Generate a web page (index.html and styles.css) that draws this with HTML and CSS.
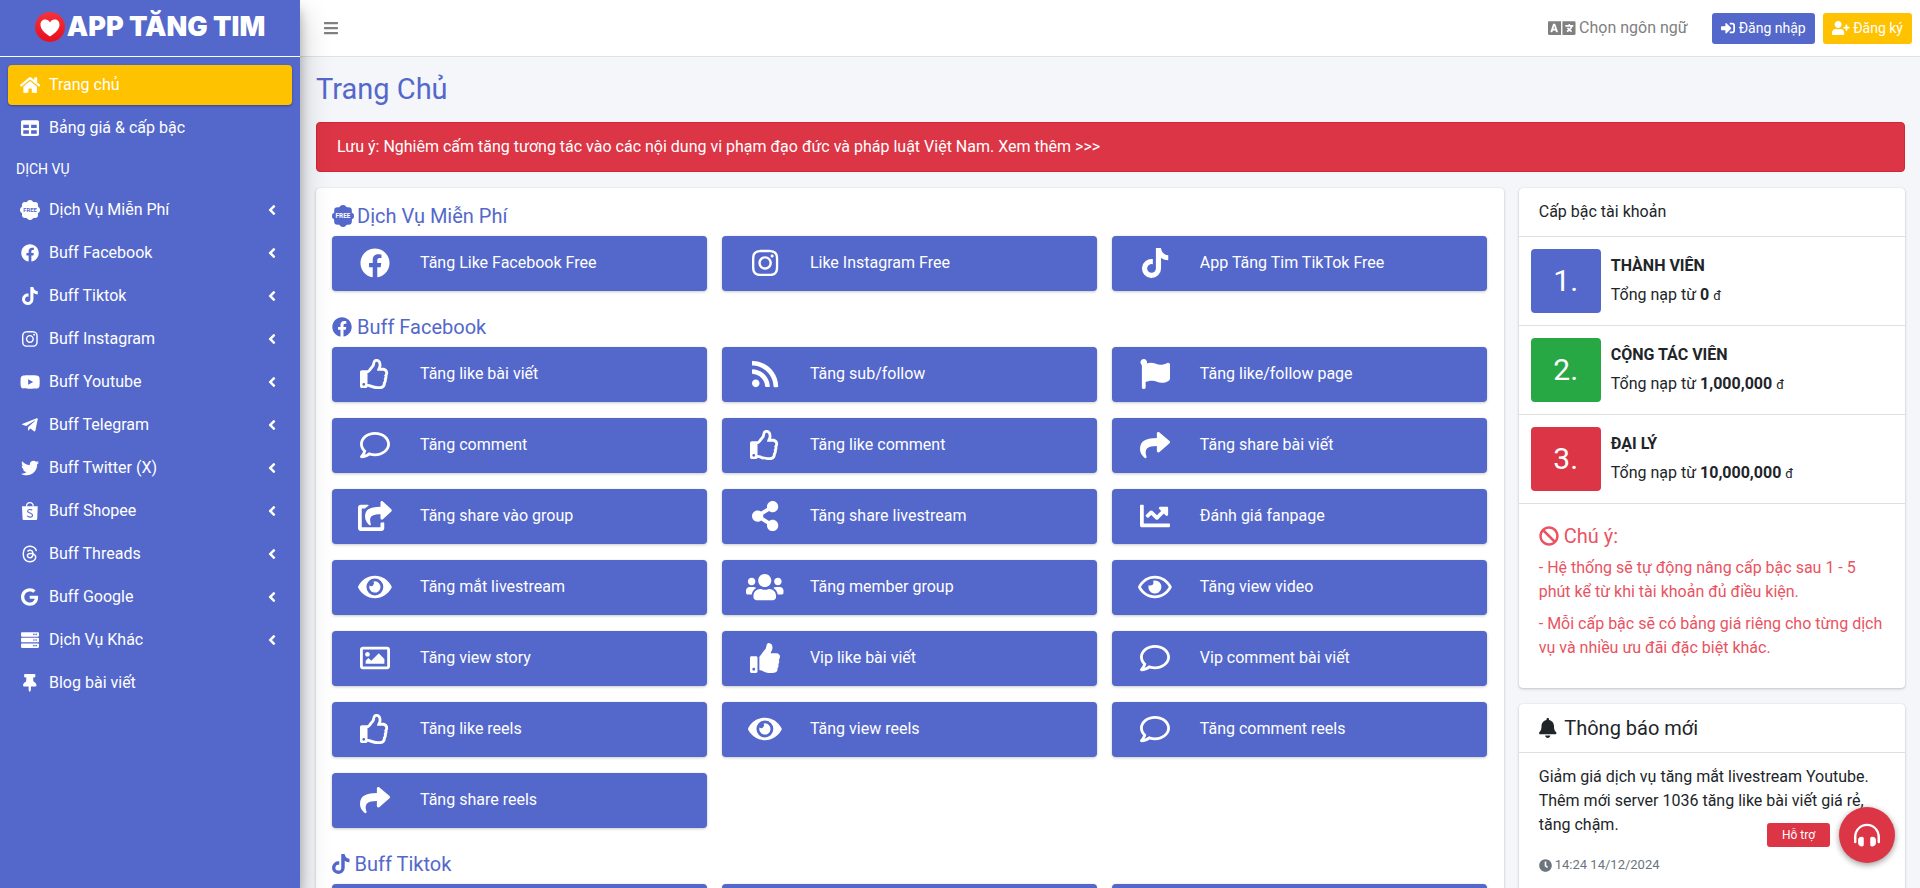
FILE: index.html
```html
<!DOCTYPE html>
<html lang="vi">
<head>
<meta charset="utf-8">
<meta name="viewport" content="width=device-width, initial-scale=1">
<title>App Tăng Tim</title>
<link rel="stylesheet" href="styles.css">
</head>
<body>
<svg class="sprite" aria-hidden="true">
<defs>
<path id="home" d="M280.37 148.26L96 300.11V464a16 16 0 0 0 16 16l112.06-.29a16 16 0 0 0 15.92-16V368a16 16 0 0 1 16-16h64a16 16 0 0 1 16 16v95.64a16 16 0 0 0 16 16.05L464 480a16 16 0 0 0 16-16V300L295.67 148.26a12.19 12.19 0 0 0-15.3 0zM571.6 251.47L488 182.56V44.05a12 12 0 0 0-12-12h-56a12 12 0 0 0-12 12v72.61L318.47 43a48 48 0 0 0-61 0L4.34 251.47a12 12 0 0 0-1.6 16.9l25.5 31A12 12 0 0 0 45.15 301l235.22-193.74a12.19 12.19 0 0 1 15.3 0L530.9 301a12 12 0 0 0 16.9-1.6l25.5-31a12 12 0 0 0-1.7-16.93z"/>
<path id="table" d="M464 32H48C21.49 32 0 53.49 0 80v352c0 26.51 21.49 48 48 48h416c26.51 0 48-21.49 48-48V80c0-26.51-21.49-48-48-48zM224 416H64v-96h160v96zm0-160H64v-96h160v96zm224 160H288v-96h160v96zm0-160H288v-96h160v96z"/>
<path id="bars" d="M16 132h416c8.837 0 16-7.163 16-16V76c0-8.837-7.163-16-16-16H16C7.163 60 0 67.163 0 76v40c0 8.837 7.163 16 16 16zm0 160h416c8.837 0 16-7.163 16-16v-40c0-8.837-7.163-16-16-16H16c-8.837 0-16 7.163-16 16v40c0 8.837 7.163 16 16 16zm0 160h416c8.837 0 16-7.163 16-16v-40c0-8.837-7.163-16-16-16H16c-8.837 0-16 7.163-16 16v40c0 8.837 7.163 16 16 16z"/>
<path id="facebook" d="M504 256C504 119 393 8 256 8S8 119 8 256c0 123.78 90.69 226.38 209.25 245V327.69h-63V256h63v-54.64c0-62.15 37-96.48 93.67-96.48 27.14 0 55.52 4.84 55.52 4.84v61h-31.28c-30.8 0-40.41 19.12-40.41 38.73V256h68.78l-11 71.69h-57.78V501C413.31 482.38 504 379.78 504 256z"/>
<path id="tiktok" d="M448,209.91a210.06,210.06,0,0,1-122.77-39.25V349.38A162.55,162.55,0,1,1,185,188.31V278.2a74.62,74.62,0,1,0,52.23,71.18V0l88,0a121.18,121.18,0,0,0,1.86,22.17h0A122.18,122.18,0,0,0,381,102.39a121.43,121.43,0,0,0,67,20.14Z"/>
<path id="instagram" d="M224.1 141c-63.6 0-114.9 51.3-114.9 114.9s51.3 114.9 114.9 114.9S339 319.5 339 255.9 287.7 141 224.1 141zm0 189.6c-41.1 0-74.7-33.5-74.7-74.7s33.5-74.7 74.7-74.7 74.7 33.5 74.7 74.7-33.6 74.7-74.7 74.7zm146.4-194.3c0 14.9-12 26.8-26.8 26.8-14.9 0-26.8-12-26.8-26.8s12-26.8 26.8-26.8 26.8 12 26.8 26.8zm76.1 27.2c-1.7-35.9-9.9-67.7-36.2-93.9-26.2-26.2-58-34.4-93.9-36.2-37-2.1-147.9-2.1-184.9 0-35.8 1.7-67.6 9.9-93.9 36.1s-34.4 58-36.2 93.9c-2.1 37-2.1 147.9 0 184.9 1.7 35.9 9.9 67.7 36.2 93.9s58 34.4 93.9 36.2c37 2.1 147.9 2.1 184.9 0 35.9-1.7 67.7-9.9 93.9-36.2 26.2-26.2 34.4-58 36.2-93.9 2.1-37 2.1-147.8 0-184.8zM398.8 388c-7.8 19.6-22.9 34.7-42.6 42.6-29.5 11.7-99.5 9-132.1 9s-102.7 2.6-132.1-9c-19.6-7.8-34.7-22.9-42.6-42.6-11.7-29.5-9-99.5-9-132.1s-2.6-102.7 9-132.1c7.8-19.6 22.9-34.7 42.6-42.6 29.5-11.7 99.5-9 132.1-9s102.7-2.6 132.1 9c19.6 7.8 34.7 22.9 42.6 42.6 11.7 29.5 9 99.5 9 132.1s2.7 102.7-9 132.1z"/>
<path id="youtube" d="M549.655 124.083c-6.281-23.65-24.787-42.276-48.284-48.597C458.781 64 288 64 288 64S117.22 64 74.629 75.486c-23.497 6.322-42.003 24.947-48.284 48.597-11.412 42.867-11.412 132.305-11.412 132.305s0 89.438 11.412 132.305c6.281 23.65 24.787 41.5 48.284 47.821C117.22 448 288 448 288 448s170.78 0 213.371-11.486c23.497-6.321 42.003-24.171 48.284-47.821 11.412-42.867 11.412-132.305 11.412-132.305s0-89.438-11.412-132.305zm-317.51 213.508V175.185l142.739 81.205-142.739 81.201z"/>
<path id="telegram" d="M446.7 98.6l-67.6 318.8c-5.1 22.5-18.4 28.1-37.3 17.5l-103-75.9-49.7 47.8c-5.5 5.5-10.1 10.1-20.7 10.1l7.4-104.9 190.9-172.5c8.3-7.4-1.8-11.5-12.9-4.1L117.8 284 16.2 252.2c-22.1-6.9-22.5-22.1 4.6-32.7L418.2 66.4c18.4-6.9 34.5 4.1 28.5 32.2z"/>
<path id="twitter" d="M459.37 151.716c.325 4.548.325 9.097.325 13.645 0 138.72-105.583 298.558-298.558 298.558-59.452 0-114.68-17.219-161.137-47.106 8.447.974 16.568 1.299 25.34 1.299 49.055 0 94.213-16.568 130.274-44.832-46.132-.975-84.792-31.188-98.112-72.772 6.498.974 12.995 1.624 19.818 1.624 9.421 0 18.843-1.3 27.614-3.573-48.081-9.747-84.143-51.98-84.143-102.985v-1.299c13.969 7.797 30.214 12.67 47.431 13.319-28.264-18.843-46.781-51.005-46.781-87.391 0-19.492 5.197-37.36 14.294-52.954 51.655 63.675 129.3 105.258 216.365 109.807-1.624-7.797-2.599-15.918-2.599-24.04 0-57.828 46.782-104.934 104.934-104.934 30.213 0 57.502 12.67 76.67 33.137 23.715-4.548 46.456-13.32 66.599-25.34-7.798 24.366-24.366 44.833-46.132 57.827 21.117-2.273 41.584-8.122 60.426-16.243-14.292 20.791-32.161 39.308-52.628 54.253z"/>
<path id="threads" d="M331.5 235.7c2.2 .9 4.2 1.9 6.3 2.8c29.2 14.1 50.6 35.2 61.8 61.4c15.7 36.5 17.2 95.8-30.3 143.2c-36.2 36.2-80.3 52.5-142.6 53h-.3c-70.2-.5-124.1-24.1-160.4-70.2c-32.3-41-48.9-98.1-49.5-169.6V256v-.2C17 184.3 33.6 127.2 65.9 86.2C102.2 40.1 156.2 16.5 226.4 16h.3c70.3 .5 124.9 24 162.3 69.9c18.4 22.7 32 50 40.6 81.7l-40.4 10.8c-7.1-25.8-17.8-47.8-32.2-65.4c-29.2-35.8-73-54.2-130.5-54.6c-57 .5-100.1 18.8-128.2 54.4C72.1 146.1 58.5 194.3 58 256c.5 61.7 14.1 109.9 40.3 143.3c28 35.6 71.2 53.9 128.2 54.4c51.4-.4 85.4-12.6 113.7-40.9c32.3-32.2 31.7-71.8 21.4-95.9c-6.1-14.2-17.1-26-31.9-34.9c-3.7 26.9-11.8 48.3-24.7 64.8c-17.1 21.8-41.4 33.6-72.7 35.3c-23.6 1.3-46.3-4.4-63.9-16c-20.8-13.8-33-34.8-34.3-59.3c-2.5-48.3 35.7-83 95.2-86.4c21.1-1.2 40.9-.3 59.2 2.8c-2.4-14.8-7.3-26.6-14.6-35.2c-10-11.7-25.6-17.7-46.2-17.8H227c-16.6 0-39 4.6-53.3 26.3l-34.4-23.6c19.2-29.1 50.3-45.1 87.8-45.1h.8c62.6 .4 99.9 39.5 103.7 107.7l-.2 .2zm-156 68.8c1.3 25.1 28.4 36.8 54.6 35.3c25.6-1.4 54.6-11.4 59.5-73.2c-13.2-2.9-27.8-4.4-43.4-4.4c-4.8 0-9.6 .1-14.4 .4c-42.9 2.4-57.2 23.2-56.2 41.8l-.1 .1z"/>
<path id="google" d="M488 261.8C488 403.3 391.1 504 248 504 110.8 504 0 393.2 0 256S110.8 8 248 8c66.8 0 123 24.5 166.3 64.9l-67.5 64.9C258.5 52.6 94.3 116.6 94.3 256c0 86.5 69.1 156.6 153.7 156.6 98.2 0 135-70.4 140.8-106.9H248v-85.3h236.1c2.3 12.7 3.9 24.9 3.9 41.4z"/>
<path id="server" d="M480 160H32c-17.673 0-32-14.327-32-32V64c0-17.673 14.327-32 32-32h448c17.673 0 32 14.327 32 32v64c0 17.673-14.327 32-32 32zm-48-88c-13.255 0-24 10.745-24 24s10.745 24 24 24 24-10.745 24-24-10.745-24-24-24zm-64 0c-13.255 0-24 10.745-24 24s10.745 24 24 24 24-10.745 24-24-10.745-24-24-24zm112 248H32c-17.673 0-32-14.327-32-32v-64c0-17.673 14.327-32 32-32h448c17.673 0 32 14.327 32 32v64c0 17.673-14.327 32-32 32zm-48-88c-13.255 0-24 10.745-24 24s10.745 24 24 24 24-10.745 24-24-10.745-24-24-24zm-64 0c-13.255 0-24 10.745-24 24s10.745 24 24 24 24-10.745 24-24-10.745-24-24-24zm112 248H32c-17.673 0-32-14.327-32-32v-64c0-17.673 14.327-32 32-32h448c17.673 0 32 14.327 32 32v64c0 17.673-14.327 32-32 32zm-48-88c-13.255 0-24 10.745-24 24s10.745 24 24 24 24-10.745 24-24-10.745-24-24-24zm-64 0c-13.255 0-24 10.745-24 24s10.745 24 24 24 24-10.745 24-24-10.745-24-24-24z"/>
<path id="pin" d="M298.028 214.267L285.793 96H328c13.255 0 24-10.745 24-24V24c0-13.255-10.745-24-24-24H56C42.745 0 32 10.745 32 24v48c0 13.255 10.745 24 24 24h42.207L85.972 214.267C37.465 236.82 0 277.261 0 328c0 13.255 10.745 24 24 24h136v104.007c0 1.242.289 2.467.845 3.578l24 48c2.941 5.882 11.364 5.893 14.311 0l24-48a8.008 8.008 0 0 0 .845-3.578V352h136c13.255 0 24-10.745 24-24-.001-51.183-37.983-91.42-85.973-113.733z"/>
<path id="language" d="M152.1 236.2c-3.5-12.1-7.8-33.2-7.8-33.2h-.5s-4.3 21.1-7.8 33.2l-11.1 37.5H163zM616 96H336v320h280c13.3 0 24-10.7 24-24V120c0-13.3-10.7-24-24-24zm-24 120c0 6.6-5.4 12-12 12h-11.4c-6.9 23.6-21.7 47.4-42.7 69.9 8.4 6.4 17.1 12.5 26.1 18 5.5 3.4 7.3 10.5 4.1 16.2l-7.9 13.9c-3.4 5.9-10.9 7.8-16.7 4.3-12.6-7.8-24.5-16.1-35.4-24.9-10.9 8.7-22.7 17.1-35.4 24.9-5.8 3.5-13.3 1.6-16.7-4.3l-7.9-13.9c-3.2-5.6-1.4-12.8 4.2-16.2 9.3-5.7 18-11.7 26.1-18-7.9-8.4-14.9-17-21-25.7-4-5.7-2.2-13.6 3.7-17.1l6.5-3.9 7.3-4.3c5.4-3.2 12.4-1.7 16 3.4 5 7 10.8 14 17.4 20.9 13.5-14.2 23.8-28.9 30-43.2H412c-6.6 0-12-5.4-12-12v-16c0-6.6 5.4-12 12-12h64v-16c0-6.6 5.4-12 12-12h16c6.6 0 12 5.4 12 12v16h64c6.6 0 12 5.4 12 12zM0 120v272c0 13.3 10.7 24 24 24h280V96H24c-13.3 0-24 10.7-24 24zm58.9 216.1L116.4 167c1.7-4.9 6.2-8.1 11.4-8.1h32.5c5.1 0 9.7 3.3 11.4 8.1l57.5 169.1c2.6 7.8-3.1 15.9-11.4 15.9h-22.9a12 12 0 0 1-11.5-8.6l-9.4-31.9h-60.2l-9.1 31.8c-1.5 5.1-6.2 8.7-11.5 8.7H70.3c-8.2 0-14-8.1-11.4-15.9z"/>
<path id="sign-in" d="M416 448h-84c-6.6 0-12-5.4-12-12v-40c0-6.6 5.4-12 12-12h84c17.7 0 32-14.3 32-32V160c0-17.7-14.3-32-32-32h-84c-6.6 0-12-5.4-12-12V76c0-6.6 5.4-12 12-12h84c53 0 96 43 96 96v192c0 53-43 96-96 96zm-47-201L201 79c-15-15-41-4.5-41 17v96H24c-13.3 0-24 10.7-24 24v96c0 13.3 10.7 24 24 24h136v96c0 21.5 26 32 41 17l168-168c9.3-9.4 9.3-24.6 0-34z"/>
<path id="user-plus" d="M624 208h-64v-64c0-8.8-7.2-16-16-16h-32c-8.8 0-16 7.2-16 16v64h-64c-8.8 0-16 7.2-16 16v32c0 8.8 7.2 16 16 16h64v64c0 8.8 7.2 16 16 16h32c8.8 0 16-7.2 16-16v-64h64c8.8 0 16-7.2 16-16v-32c0-8.8-7.2-16-16-16zm-400 48c70.7 0 128-57.3 128-128S294.7 0 224 0 96 57.3 96 128s57.3 128 128 128zm89.6 32h-16.7c-22.2 10.2-46.9 16-72.9 16s-50.6-5.8-72.9-16h-16.7C60.2 288 0 348.2 0 422.4V464c0 26.5 21.5 48 48 48h352c26.5 0 48-21.5 48-48v-41.6c0-74.2-60.2-134.4-134.4-134.4z"/>
<path id="angle" d="M31.7 239l136-136c9.4-9.4 24.6-9.4 33.9 0l22.6 22.6c9.4 9.4 9.4 24.6 0 33.9L127.9 256l96.4 96.4c9.4 9.4 9.4 24.6 0 33.9L201.7 409c-9.4 9.4-24.6 9.4-33.9 0l-136-136c-9.5-9.4-9.5-24.6-.1-34z"/>
<path id="like" d="M466.27 286.69C475.04 271.84 480 256 480 236.85c0-44.015-37.218-85.58-85.82-85.58H357.7c4.92-12.81 8.85-28.13 8.85-46.54C366.55 31.936 328.86 0 271.28 0c-61.607 0-58.093 94.933-71.76 108.6-22.747 22.747-49.615 66.447-68.76 83.4H32c-17.673 0-32 14.327-32 32v240c0 17.673 14.327 32 32 32h64c14.893 0 27.408-10.174 30.978-23.95 44.509 1.001 75.06 39.94 177.802 39.94 7.22 0 15.22.01 22.22.01 77.117 0 111.986-39.423 112.94-95.33 13.319-18.425 20.299-43.122 17.34-66.99 9.854-18.452 13.664-40.343 8.99-62.99zm-61.75 53.83c12.56 21.13 1.26 49.41-13.94 57.57 7.7 48.78-17.608 65.9-53.12 65.9h-37.82c-71.639 0-118.029-37.82-171.64-37.82V240h10.92c28.36 0 67.98-70.89 94.54-97.46 28.36-28.36 18.91-75.63 37.82-94.54 47.27 0 47.27 32.98 47.27 56.73 0 39.17-28.36 56.72-28.36 94.54h103.99c21.11 0 37.73 18.91 37.82 37.82.09 18.9-12.82 37.81-22.27 37.81 13.489 14.555 16.371 45.236-5.21 65.62zM88 432c0 13.255-10.745 24-24 24s-24-10.745-24-24 10.745-24 24-24 24 10.745 24 24z"/>
<path id="like-solid" d="M104 224H24c-13.255 0-24 10.745-24 24v240c0 13.255 10.745 24 24 24h80c13.255 0 24-10.745 24-24V248c0-13.255-10.745-24-24-24zM64 472c-13.255 0-24-10.745-24-24s10.745-24 24-24 24 10.745 24 24-10.745 24-24 24zM384 81.452c0 42.416-25.97 66.208-33.277 94.548h101.723c33.397 0 59.397 27.746 59.553 58.098.084 17.938-7.546 37.249-19.439 49.197l-.11.11c9.836 23.337 8.237 56.037-9.308 79.469 8.681 25.895-.069 57.704-16.382 74.757 4.298 17.598 2.244 32.575-6.148 44.632C440.202 511.587 389.616 512 346.839 512l-2.845-.001c-48.287-.017-87.806-17.598-119.56-31.725-15.957-7.099-36.821-15.887-52.651-16.178-6.54-.12-11.783-5.457-11.783-11.998v-213.77c0-3.2 1.282-6.271 3.558-8.521 39.614-39.144 56.648-80.587 89.117-113.111 14.804-14.832 20.188-37.236 25.393-58.902C282.515 39.293 291.817 0 312 0c24 0 72 8 72 81.452z"/>
<path id="rss" d="M128.081 415.959c0 35.369-28.672 64.041-64.041 64.041S0 451.328 0 415.959s28.672-64.041 64.041-64.041 64.04 28.673 64.04 64.041zm175.66 47.25c-8.354-154.6-132.185-278.587-286.95-286.95C7.656 175.765 0 183.105 0 192.253v48.069c0 8.415 6.49 15.472 14.887 16.018 111.832 7.284 201.473 96.702 208.772 208.772.547 8.397 7.604 14.887 16.018 14.887h48.069c9.149.001 16.489-7.655 15.995-16.79zm144.249.288C439.596 229.677 251.465 40.445 16.503 32.01 7.473 31.686 0 38.981 0 48.016v48.068c0 8.625 6.835 15.645 15.453 15.999 191.179 7.839 344.627 161.316 352.465 352.465.353 8.618 7.373 15.453 15.999 15.453h48.068c9.034-.001 16.329-7.474 16.005-16.504z"/>
<path id="flag" d="M349.565 98.783C295.978 98.783 251.721 64 184.348 64c-24.955 0-47.309 4.384-68.045 12.013a55.947 55.947 0 0 0 3.586-23.562C118.117 24.015 94.806 1.206 66.338.048 34.345-1.254 8 24.296 8 56c0 19.026 9.497 35.825 24 45.945V488c0 13.255 10.745 24 24 24h16c13.255 0 24-10.745 24-24v-94.4c28.311-12.064 63.582-22.122 114.435-22.122 53.588 0 97.844 34.783 165.217 34.783 48.169 0 86.667-16.294 122.505-40.858C506.84 359.452 512 349.571 512 339.045v-243.1c0-23.393-24.269-38.87-45.485-29.016-34.338 15.948-76.454 31.854-116.95 31.854z"/>
<path id="comment" d="M256 32C114.6 32 0 125.1 0 240c0 47.6 19.9 91.2 52.9 126.3C38 405.7 7 439.1 6.5 439.5c-6.6 7-8.4 17.2-4.6 26S14.4 480 24 480c61.5 0 110-25.7 139.1-46.3C192 442.8 223.2 448 256 448c141.4 0 256-93.1 256-208S397.4 32 256 32zm0 368c-26.7 0-53.1-4.1-78.4-12.1l-22.7-7.2-19.5 13.8c-14.3 10.1-33.9 21.4-57.5 29 7.3-12.1 14.4-25.7 19.9-40.2l10.6-28.1-20.6-21.8C69.7 314.1 48 282.2 48 240c0-88.2 93.3-160 208-160s208 71.8 208 160-93.3 160-208 160z"/>
<path id="share" d="M503.691 189.836L327.687 37.851C312.281 24.546 288 35.347 288 56.015v80.053C127.371 137.907 0 170.1 0 322.326c0 61.441 39.581 122.309 83.333 154.132 13.653 9.931 33.111-2.533 28.077-18.631C66.066 312.814 132.917 274.316 288 272.085V360c0 20.7 24.3 31.453 39.687 18.164l176.004-152c11.071-9.562 11.086-26.753 0-36.328z"/>
<path id="share-square" d="M568.482 177.448L424.479 313.433C409.3 327.768 384 317.14 384 295.985v-71.963c-144.575.97-205.566 35.113-164.775 171.353 4.483 14.973-12.846 26.567-25.006 17.33C155.252 383.105 120 326.488 120 269.339c0-143.937 117.599-172.5 264-173.312V24.012c0-21.174 25.317-31.768 40.479-17.448l144.003 135.988c10.02 9.463 10.028 25.425 0 34.896zM384 379.128V448H64V128h50.916a11.99 11.99 0 0 0 8.648-3.693c14.953-15.568 32.237-27.89 51.014-37.676C185.708 80.83 181.584 64 169.033 64H48C21.49 64 0 85.49 0 112v352c0 26.51 21.49 48 48 48h352c26.51 0 48-21.49 48-48v-88.806c0-8.288-8.197-14.066-16.011-11.302a71.83 71.83 0 0 1-34.189 3.377c-7.27-1.046-13.8 4.514-13.8 11.859z"/>
<path id="share-alt" d="M352 320c-22.608 0-43.387 7.819-59.79 20.895l-102.486-64.054a96.551 96.551 0 0 0 0-41.683l102.486-64.054C308.613 184.181 329.392 192 352 192c53.019 0 96-42.981 96-96S405.019 0 352 0s-96 42.981-96 96c0 7.158.79 14.13 2.276 20.841L155.79 180.895C139.387 167.819 118.608 160 96 160c-53.019 0-96 42.981-96 96s42.981 96 96 96c22.608 0 43.387-7.819 59.79-20.895l102.486 64.054A96.301 96.301 0 0 0 256 416c0 53.019 42.981 96 96 96s96-42.981 96-96-42.981-96-96-96z"/>
<path id="chart" d="M496 384H64V80c0-8.84-7.16-16-16-16H16C7.16 64 0 71.16 0 80v336c0 17.67 14.33 32 32 32h464c8.84 0 16-7.16 16-16v-32c0-8.84-7.16-16-16-16zM464 96H345.94c-21.38 0-32.09 25.85-16.97 40.97l32.4 32.4L288 242.75l-73.37-73.37c-12.5-12.5-32.76-12.5-45.25 0l-68.69 68.69c-6.25 6.25-6.25 16.38 0 22.63l22.62 22.62c6.25 6.25 16.38 6.25 22.63 0L192 237.25l73.37 73.37c12.5 12.5 32.76 12.5 45.25 0l96-96 32.4 32.4c15.12 15.12 40.97 4.41 40.97-16.97V112c.01-8.84-7.15-16-15.99-16z"/>
<path id="eye-solid" d="M572.52 241.4C518.29 135.59 410.93 64 288 64S57.68 135.64 3.48 241.41a32.35 32.35 0 0 0 0 29.19C57.71 376.41 165.07 448 288 448s230.32-71.64 284.52-177.41a32.35 32.35 0 0 0 0-29.19zM288 400a144 144 0 1 1 144-144 143.93 143.93 0 0 1-144 144zm0-240a95.31 95.31 0 0 0-25.31 3.79 47.85 47.85 0 0 1-66.9 66.9A95.78 95.78 0 1 0 288 160z"/>
<path id="eye" d="M288 144a110.94 110.94 0 0 0-31.24 5 55.4 55.4 0 0 1 7.24 27 56 56 0 0 1-56 56 55.4 55.4 0 0 1-27-7.24A111.71 111.71 0 1 0 288 144zm284.52 97.4C518.29 135.59 410.93 64 288 64S57.68 135.64 3.48 241.41a32.35 32.35 0 0 0 0 29.19C57.71 376.41 165.07 448 288 448s230.32-71.64 284.52-177.41a32.35 32.35 0 0 0 0-29.19zM288 400c-98.65 0-189.09-55-237.93-144C98.91 167 189.34 112 288 112s189.09 55 237.93 144C477.1 345 386.66 400 288 400z"/>
<path id="users" d="M96 224c35.3 0 64-28.7 64-64s-28.7-64-64-64-64 28.7-64 64 28.7 64 64 64zm448 0c35.3 0 64-28.7 64-64s-28.7-64-64-64-64 28.7-64 64 28.7 64 64 64zm32 32h-64c-17.6 0-33.5 7.1-45.1 18.6 40.3 22.1 68.9 62 75.1 109.4h66c17.7 0 32-14.3 32-32v-32c0-35.3-28.7-64-64-64zm-256 0c61.9 0 112-50.1 112-112S381.9 32 320 32 208 82.1 208 144s50.1 112 112 112zm76.8 32h-8.3c-20.8 10-43.9 16-68.5 16s-47.6-6-68.5-16h-8.3C179.6 288 128 339.6 128 403.2V432c0 26.5 21.5 48 48 48h288c26.5 0 48-21.5 48-48v-28.8c0-63.6-51.6-115.2-115.2-115.2zm-223.7-13.4C161.5 263.1 145.6 256 128 256H64c-35.3 0-64 28.7-64 64v32c0 17.7 14.3 32 32 32h65.9c6.3-47.4 34.9-87.3 75.2-109.4z"/>
<path id="image" d="M464 64H48C21.49 64 0 85.49 0 112v288c0 26.51 21.49 48 48 48h416c26.51 0 48-21.49 48-48V112c0-26.51-21.49-48-48-48zm-6 336H54a6 6 0 0 1-6-6V118a6 6 0 0 1 6-6h404a6 6 0 0 1 6 6v276a6 6 0 0 1-6 6zM128 152c-22.091 0-40 17.909-40 40s17.909 40 40 40 40-17.909 40-40-17.909-40-40-40zM96 352h320v-80l-87.515-87.515c-4.686-4.686-12.284-4.686-16.971 0L192 304l-39.515-39.515c-4.686-4.686-12.284-4.686-16.971 0L96 304v48z"/>
<path id="ban" d="M256 8C119.034 8 8 119.033 8 256s111.034 248 248 248 248-111.034 248-248S392.967 8 256 8zm130.108 117.892c65.448 65.448 70 165.481 20.677 235.637L150.47 105.216c70.204-49.356 170.226-44.735 235.638 20.676zM125.892 386.108c-65.448-65.448-70-165.481-20.677-235.637L361.53 406.784c-70.203 49.356-170.226 44.736-235.638-20.676z"/>
<path id="bell" d="M224 512c35.32 0 63.97-28.65 63.97-64H160.03c0 35.35 28.65 64 63.97 64zm215.39-149.71c-19.32-20.76-55.47-51.99-55.47-154.29 0-77.7-54.48-139.9-127.94-155.16V32c0-17.67-14.32-32-31.98-32s-31.98 14.33-31.98 32v20.84C118.56 68.1 64.08 130.3 64.08 208c0 102.3-36.15 133.53-55.47 154.29-6 6.45-8.66 14.16-8.61 21.71.11 16.4 12.98 32 32.1 32h383.8c19.12 0 32-15.6 32.1-32 .05-7.55-2.61-15.27-8.61-21.71z"/>
<path id="clock" d="M256,8C119,8,8,119,8,256S119,504,256,504,504,393,504,256,393,8,256,8Zm92.49,313h0l-20,25a16,16,0,0,1-22.49,2.5h0l-67-49.72a40,40,0,0,1-15-31.23V112a16,16,0,0,1,16-16h32a16,16,0,0,1,16,16V256l58,42.5A16,16,0,0,1,348.49,321Z"/>
<path id="headphones" d="M160 288h-16c-35.35 0-64 28.7-64 64.12v63.76c0 35.41 28.65 64.12 64 64.12h16c17.67 0 32-14.36 32-32.06V320.06c0-17.71-14.33-32.06-32-32.06zm208 0h-16c-17.67 0-32 14.35-32 32.06v127.88c0 17.7 14.33 32.06 32 32.06h16c35.35 0 64-28.71 64-64.12v-63.76c0-35.41-28.65-64.12-64-64.12zM256 32C112.91 32 4.57 151.13 0 288v112c0 8.84 7.16 16 16 16h16c8.84 0 16-7.16 16-16V288c0-114.67 93.33-207.8 208-207.82 114.67.02 208 93.15 208 207.82v112c0 8.84 7.16 16 16 16h16c8.84 0 16-7.16 16-16V288C507.43 151.13 399.09 32 256 32z"/>
<g id="badge">
<circle cx="50" cy="50" r="44"/>
<circle cx="50" cy="15" r="15"/><circle cx="50" cy="85" r="15"/><circle cx="15" cy="50" r="15"/><circle cx="85" cy="50" r="15"/>
<circle cx="25" cy="25" r="15"/><circle cx="75" cy="25" r="15"/><circle cx="25" cy="75" r="15"/><circle cx="75" cy="75" r="15"/>
</g>
</defs>
</svg>

<div class="layout">
  <aside class="sidebar">
    <a class="brand" href="#">
      <svg class="brand-mark" viewBox="0 0 60 60" aria-hidden="true">
        <defs><linearGradient id="red" x1="0" y1="0" x2="0" y2="1"><stop offset="0" stop-color="#f5323c"/><stop offset="1" stop-color="#e60f1e"/></linearGradient></defs>
        <circle cx="30" cy="30" r="30" fill="url(#red)"/>
        <path fill="#fff" d="M30 49C18 41 11 34 11 25c0-6 4-10 9.5-10 4.5 0 7.500 2.500 9.500 6 2-3.500 5-6 9.500-6C45 15 49 19 49 25c0 9-7 16-19 24z"/>
      </svg>
      <span class="brand-text">APP TĂNG TIM</span>
    </a>
    <nav class="nav">
      <a class="nav-link active" href="#"><span class="nav-icon"><svg class="icon" viewBox="0 0 576 512"><use href="#home"/></svg></span>Trang chủ</a>
      <a class="nav-link" href="#"><span class="nav-icon"><svg class="icon" viewBox="0 0 512 512"><use href="#table"/></svg></span>Bảng giá &amp; cấp bậc</a>
      <div class="nav-header">DỊCH VỤ</div>
      <a class="nav-link" href="#"><span class="nav-icon"><svg class="icon badge" viewBox="0 0 100 100"><use href="#badge"/><text class="badge-text" x="50" y="60">FREE</text></svg></span>Dịch Vụ Miễn Phí<svg class="icon angle" viewBox="0 0 256 512"><use href="#angle"/></svg></a>
      <a class="nav-link" href="#"><span class="nav-icon"><svg class="icon" viewBox="0 0 512 512"><use href="#facebook"/></svg></span>Buff Facebook<svg class="icon angle" viewBox="0 0 256 512"><use href="#angle"/></svg></a>
      <a class="nav-link" href="#"><span class="nav-icon"><svg class="icon" viewBox="0 0 448 512"><use href="#tiktok"/></svg></span>Buff Tiktok<svg class="icon angle" viewBox="0 0 256 512"><use href="#angle"/></svg></a>
      <a class="nav-link" href="#"><span class="nav-icon"><svg class="icon" viewBox="0 0 448 512"><use href="#instagram"/></svg></span>Buff Instagram<svg class="icon angle" viewBox="0 0 256 512"><use href="#angle"/></svg></a>
      <a class="nav-link" href="#"><span class="nav-icon"><svg class="icon" viewBox="0 0 576 512"><use href="#youtube"/></svg></span>Buff Youtube<svg class="icon angle" viewBox="0 0 256 512"><use href="#angle"/></svg></a>
      <a class="nav-link" href="#"><span class="nav-icon"><svg class="icon" viewBox="0 0 448 512"><use href="#telegram"/></svg></span>Buff Telegram<svg class="icon angle" viewBox="0 0 256 512"><use href="#angle"/></svg></a>
      <a class="nav-link" href="#"><span class="nav-icon"><svg class="icon" viewBox="0 0 512 512"><use href="#twitter"/></svg></span>Buff Twitter (X)<svg class="icon angle" viewBox="0 0 256 512"><use href="#angle"/></svg></a>
      <a class="nav-link" href="#"><span class="nav-icon"><svg class="icon" viewBox="0 0 448 512"><path d="M0 120h448l-16 360q-2 32-32 32H48q-30 0-32-32z"/><path class="handle" d="M128 130C128 50 176 18 224 18s96 32 96 112"/><path class="bag-mark" d="M290 235c-30-30-130-35-130 25 0 65 140 40 140 115 0 70-110 65-152 22"/></svg></span>Buff Shopee<svg class="icon angle" viewBox="0 0 256 512"><use href="#angle"/></svg></a>
      <a class="nav-link" href="#"><span class="nav-icon"><svg class="icon" viewBox="0 0 448 512"><use href="#threads"/></svg></span>Buff Threads<svg class="icon angle" viewBox="0 0 256 512"><use href="#angle"/></svg></a>
      <a class="nav-link" href="#"><span class="nav-icon"><svg class="icon" viewBox="0 0 488 512"><use href="#google"/></svg></span>Buff Google<svg class="icon angle" viewBox="0 0 256 512"><use href="#angle"/></svg></a>
      <a class="nav-link" href="#"><span class="nav-icon"><svg class="icon" viewBox="0 0 512 512"><use href="#server"/></svg></span>Dịch Vụ Khác<svg class="icon angle" viewBox="0 0 256 512"><use href="#angle"/></svg></a>
      <a class="nav-link" href="#"><span class="nav-icon"><svg class="icon" viewBox="0 0 384 512"><use href="#pin"/></svg></span>Blog bài viết</a>
    </nav>
  </aside>

  <div class="page">
    <header class="topbar">
      <button class="menu-button" type="button" aria-label="Menu"><svg class="icon" viewBox="0 0 448 512"><use href="#bars"/></svg></button>
      <div class="topbar-end">
        <a class="language" href="#"><svg class="icon" viewBox="0 0 640 512"><use href="#language"/></svg>Chọn ngôn ngữ</a>
        <a class="btn btn-primary" href="#"><svg class="icon" viewBox="0 0 512 512"><use href="#sign-in"/></svg>Đăng nhập</a>
        <a class="btn btn-warning" href="#"><svg class="icon" viewBox="0 0 640 512"><use href="#user-plus"/></svg>Đăng ký</a>
      </div>
    </header>

    <main class="content">
      <h1 class="page-title">Trang Chủ</h1>
      <a class="alert" href="#">Lưu ý: Nghiêm cấm tăng tương tác vào các nội dung vi phạm đạo đức và pháp luật Việt Nam. Xem thêm &gt;&gt;&gt;</a>

      <div class="columns">
        <div class="card services">
          <section class="group">
            <h2 class="group-title"><svg class="icon badge" viewBox="0 0 100 100"><use href="#badge"/><text class="badge-text" x="50" y="60">FREE</text></svg>Dịch Vụ Miễn Phí</h2>
            <div class="tiles">
              <a class="tile" href="#"><span class="tile-icon"><svg class="icon" viewBox="0 0 512 512"><use href="#facebook"/></svg></span>Tăng Like Facebook Free</a>
              <a class="tile" href="#"><span class="tile-icon"><svg class="icon" viewBox="0 0 448 512"><use href="#instagram"/></svg></span>Like Instagram Free</a>
              <a class="tile" href="#"><span class="tile-icon"><svg class="icon" viewBox="0 0 448 512"><use href="#tiktok"/></svg></span>App Tăng Tim TikTok Free</a>
            </div>
          </section>
          <section class="group">
            <h2 class="group-title"><svg class="icon" viewBox="0 0 512 512"><use href="#facebook"/></svg>Buff Facebook</h2>
            <div class="tiles">
              <a class="tile" href="#"><span class="tile-icon"><svg class="icon" viewBox="0 0 512 512"><use href="#like"/></svg></span>Tăng like bài viết</a>
              <a class="tile" href="#"><span class="tile-icon"><svg class="icon" viewBox="0 0 448 512"><use href="#rss"/></svg></span>Tăng sub/follow</a>
              <a class="tile" href="#"><span class="tile-icon"><svg class="icon" viewBox="0 0 512 512"><use href="#flag"/></svg></span>Tăng like/follow page</a>
              <a class="tile" href="#"><span class="tile-icon"><svg class="icon" viewBox="0 0 512 512"><use href="#comment"/></svg></span>Tăng comment</a>
              <a class="tile" href="#"><span class="tile-icon"><svg class="icon" viewBox="0 0 512 512"><use href="#like"/></svg></span>Tăng like comment</a>
              <a class="tile" href="#"><span class="tile-icon"><svg class="icon" viewBox="0 0 512 512"><use href="#share"/></svg></span>Tăng share bài viết</a>
              <a class="tile" href="#"><span class="tile-icon"><svg class="icon" viewBox="0 0 576 512"><use href="#share-square"/></svg></span>Tăng share vào group</a>
              <a class="tile" href="#"><span class="tile-icon"><svg class="icon" viewBox="0 0 448 512"><use href="#share-alt"/></svg></span>Tăng share livestream</a>
              <a class="tile" href="#"><span class="tile-icon"><svg class="icon" viewBox="0 0 512 512"><use href="#chart"/></svg></span>Đánh giá fanpage</a>
              <a class="tile" href="#"><span class="tile-icon"><svg class="icon" viewBox="0 0 576 512"><use href="#eye-solid"/></svg></span>Tăng mắt livestream</a>
              <a class="tile" href="#"><span class="tile-icon"><svg class="icon" viewBox="0 0 640 512"><use href="#users"/></svg></span>Tăng member group</a>
              <a class="tile" href="#"><span class="tile-icon"><svg class="icon" viewBox="0 0 576 512"><use href="#eye"/></svg></span>Tăng view video</a>
              <a class="tile" href="#"><span class="tile-icon"><svg class="icon" viewBox="0 0 512 512"><use href="#image"/></svg></span>Tăng view story</a>
              <a class="tile" href="#"><span class="tile-icon"><svg class="icon" viewBox="0 0 512 512"><use href="#like-solid"/></svg></span>Vip like bài viết</a>
              <a class="tile" href="#"><span class="tile-icon"><svg class="icon" viewBox="0 0 512 512"><use href="#comment"/></svg></span>Vip comment bài viết</a>
              <a class="tile" href="#"><span class="tile-icon"><svg class="icon" viewBox="0 0 512 512"><use href="#like"/></svg></span>Tăng like reels</a>
              <a class="tile" href="#"><span class="tile-icon"><svg class="icon" viewBox="0 0 576 512"><use href="#eye-solid"/></svg></span>Tăng view reels</a>
              <a class="tile" href="#"><span class="tile-icon"><svg class="icon" viewBox="0 0 512 512"><use href="#comment"/></svg></span>Tăng comment reels</a>
              <a class="tile" href="#"><span class="tile-icon"><svg class="icon" viewBox="0 0 512 512"><use href="#share"/></svg></span>Tăng share reels</a>
            </div>
          </section>
          <section class="group">
            <h2 class="group-title"><svg class="icon" viewBox="0 0 448 512"><use href="#tiktok"/></svg>Buff Tiktok</h2>
            <div class="tiles">
              <a class="tile" href="#" aria-label="Tiktok"></a>
              <a class="tile" href="#" aria-label="Tiktok"></a>
              <a class="tile" href="#" aria-label="Tiktok"></a>
            </div>
          </section>
        </div>

        <div class="side">
          <section class="card">
            <h2 class="card-header">Cấp bậc tài khoản</h2>
            <div class="rank">
              <span class="rank-number rank-blue">1.</span>
              <div class="rank-text"><strong>THÀNH VIÊN</strong><span>Tổng nạp từ <b>0</b> <small>đ</small></span></div>
            </div>
            <div class="rank">
              <span class="rank-number rank-green">2.</span>
              <div class="rank-text"><strong>CỘNG TÁC VIÊN</strong><span>Tổng nạp từ <b>1,000,000</b> <small>đ</small></span></div>
            </div>
            <div class="rank">
              <span class="rank-number rank-red">3.</span>
              <div class="rank-text"><strong>ĐẠI LÝ</strong><span>Tổng nạp từ <b>10,000,000</b> <small>đ</small></span></div>
            </div>
            <div class="notice">
              <h3 class="notice-title"><svg class="icon" viewBox="0 0 512 512"><use href="#ban"/></svg>Chú ý:</h3>
              <p>- Hệ thống sẽ tự động nâng cấp bậc sau 1 - 5 phút kể từ khi tài khoản đủ điều kiện.</p>
              <p>- Mỗi cấp bậc sẽ có bảng giá riêng cho từng dịch vụ và nhiều ưu đãi đặc biệt khác.</p>
            </div>
          </section>
          <section class="card">
            <h2 class="card-header news-title"><svg class="icon" viewBox="0 0 448 512"><use href="#bell"/></svg>Thông báo mới</h2>
            <div class="news">
              <p>Giảm giá dịch vụ tăng mắt livestream Youtube. Thêm mới server 1036 tăng like bài viết giá rẻ, tăng chậm.</p>
              <div class="news-time"><svg class="icon" viewBox="0 0 512 512"><use href="#clock"/></svg>14:24 14/12/2024</div>
            </div>
          </section>
        </div>
      </div>
    </main>
  </div>
</div>

<div class="support">
  <span class="support-label">Hỗ trợ</span>
  <button class="support-button" type="button" aria-label="Hỗ trợ"><svg class="icon" viewBox="0 0 512 512"><use href="#headphones"/></svg></button>
</div>
</body>
</html>
```

FILE: styles.css
```css
:root {
  --indigo: #5468cb;
  --yellow: #ffc200;
  --red: #dc3545;
  --green: #28a745;
  --line: #dfdfdf;
}

* {
  box-sizing: border-box;
}

body {
  margin: 0;
  background: #f4f6f9;
  color: #212529;
  font-family: Roboto, "Noto Sans", sans-serif;
  font-size: 16px;
  line-height: 24px;
}

a {
  color: inherit;
  text-decoration: none;
}

h1, h2, h3, p {
  margin: 0;
  font-weight: 400;
}

.sprite {
  position: absolute;
  width: 0;
  height: 0;
}

.icon {
  display: block;
  flex: none;
  width: auto;
  height: 1em;
  fill: currentColor;
  overflow: visible;
}

.layout {
  display: flex;
  height: 100vh;
}

/* Sidebar */
.sidebar {
  position: relative;
  z-index: 2;
  flex: none;
  width: 300px;
  background: var(--indigo);
  color: #fff;
  box-shadow: 0 14px 28px rgba(0, 0, 0, .25), 0 10px 10px rgba(0, 0, 0, .22);
}

.brand {
  display: flex;
  align-items: center;
  justify-content: center;
  gap: 2px;
  height: 57px;
  padding-bottom: 2px;
  border-bottom: 1px solid #fff;
}

.brand-mark {
  width: 30px;
  height: 30px;
}

.brand-text {
  font-family: Inter, sans-serif;
  font-size: 27px;
  font-weight: 900;
}

.nav {
  display: flex;
  flex-direction: column;
  gap: 3px;
  padding: 8px;
}

.nav-link {
  display: flex;
  align-items: center;
  height: 40px;
  padding: 0 16px 0 8px;
  border-radius: 4px;
}

.nav-link.active {
  background: var(--yellow);
  box-shadow: 0 1px 3px rgba(0, 0, 0, .12), 0 1px 2px rgba(0, 0, 0, .24);
}

.nav-icon {
  display: flex;
  justify-content: center;
  width: 28px;
  margin-right: 5px;
  font-size: 18px;
}

.angle {
  margin-left: auto;
}

.nav-header {
  padding: 6px 8px;
  font-size: 14px;
}

.badge {
  height: 20px;
}

.badge-text {
  fill: var(--indigo);
  font-size: 29px;
  font-weight: 700;
  text-anchor: middle;
}

.group-title .badge-text {
  fill: #fff;
}

.handle {
  fill: none;
  stroke: #fff;
  stroke-width: 36;
}

.bag-mark {
  fill: none;
  stroke: var(--indigo);
  stroke-width: 34;
}

/* Top bar */
.page {
  display: flex;
  flex: 1;
  flex-direction: column;
  min-width: 0;
}

.topbar {
  display: flex;
  flex: none;
  align-items: center;
  justify-content: space-between;
  height: 57px;
  padding: 0 8px;
  background: #fff;
  border-bottom: 1px solid #dee2e6;
  color: #808080;
}

.menu-button {
  padding: 8px 16px;
  border: 0;
  background: none;
  color: inherit;
  font-size: 16px;
}

.topbar-end {
  display: flex;
  align-items: center;
  gap: 8px;
}

.language {
  display: flex;
  align-items: center;
  gap: 4px;
  padding: 0 16px;
}

.language .icon {
  font-size: 22px;
}

.btn {
  display: flex;
  align-items: center;
  gap: 4px;
  height: 31px;
  padding: 0 9px;
  border-radius: 3px;
  color: #fff;
  font-size: 14px;
}

.btn-primary {
  background: var(--indigo);
}

.btn-warning {
  background: var(--yellow);
}

/* Content */
.content {
  flex: 1;
  min-height: 0;
  padding: 15px 15px 0 16px;
  overflow-y: auto;
  scrollbar-width: none;
}

.page-title {
  color: var(--indigo);
  font-size: 29px;
  line-height: 35px;
}

.alert {
  display: block;
  margin: 15px 0 16px;
  padding: 12px 20px;
  border: 1px solid #d32535;
  border-radius: 4px;
  background: var(--red);
  color: #fff;
}

.columns {
  display: grid;
  grid-template-columns: calc(75% - 4px) minmax(0, 1fr);
  gap: 15px;
  align-items: start;
}

.card {
  border-radius: 4px;
  background: #fff;
  box-shadow: 0 0 1px rgba(0, 0, 0, .13), 0 1px 3px rgba(0, 0, 0, .2);
}

.services {
  display: flex;
  flex-direction: column;
  gap: 24px;
  padding: 16px 17px 16px 16px;
}

.group-title {
  display: flex;
  align-items: center;
  gap: 5px;
  margin-bottom: 8px;
  color: var(--indigo);
  font-size: 20px;
}

.group-title .badge {
  height: 22px;
  margin-right: -2px;
}

.tiles {
  display: grid;
  grid-template-columns: repeat(3, minmax(0, 1fr));
  gap: 16px 15px;
}

.tile {
  display: flex;
  align-items: center;
  min-height: 55px;
  padding: 8px 8px 10px;
  border-radius: 4px;
  background: var(--indigo);
  color: #fff;
  box-shadow: 0 0 1px rgba(0, 0, 0, .13), 0 1px 3px rgba(0, 0, 0, .2);
}

.tile-icon {
  display: flex;
  justify-content: center;
  width: 70px;
  margin-right: 10px;
  font-size: 30px;
}

.side {
  display: flex;
  flex-direction: column;
  gap: 16px;
}

.card-header {
  padding: 12px 20px;
  border-bottom: 1px solid var(--line);
  font-size: 16px;
}

.rank {
  display: flex;
  gap: 10px;
  padding: 12px;
  border-bottom: 1px solid var(--line);
}

.rank-number {
  display: flex;
  align-items: center;
  justify-content: center;
  width: 70px;
  height: 64px;
  border-radius: 4px;
  color: #fff;
  font-size: 30px;
}

.rank-blue {
  background: var(--indigo);
}

.rank-green {
  background: var(--green);
}

.rank-red {
  background: var(--red);
}

.rank-text {
  display: flex;
  flex-direction: column;
  justify-content: center;
  padding-bottom: 2px;
  line-height: 29px;
}

.rank-text b, .rank-text strong {
  font-weight: 700;
}

.rank-text small {
  font-size: 13px;
}

.notice {
  padding: 20px 20px 28px;
  color: #e95362;
}

.notice-title {
  display: flex;
  align-items: center;
  gap: 5px;
  font-size: 20px;
}

.notice p {
  margin-top: 8px;
}

.news-title {
  display: flex;
  align-items: center;
  gap: 8px;
  font-size: 20px;
}

.news {
  padding: 12px 20px 40px;
}

.news-time {
  display: flex;
  align-items: center;
  gap: 3px;
  margin-top: 16px;
  color: #6c757d;
  font-size: 13px;
}

/* Floating support button */
.support {
  position: fixed;
  right: 25px;
  bottom: 25px;
  z-index: 3;
  display: flex;
  align-items: center;
  gap: 9px;
}

.support-label {
  padding: 0 15px;
  border-radius: 3px;
  background: var(--red);
  color: #fff;
  font-size: 12px;
}

.support-button {
  display: flex;
  align-items: center;
  justify-content: center;
  width: 56px;
  height: 56px;
  border: 0;
  border-radius: 50%;
  background: var(--red);
  color: #fff;
  font-size: 26px;
  box-shadow: 0 2px 6px rgba(0, 0, 0, .4);
}
```
